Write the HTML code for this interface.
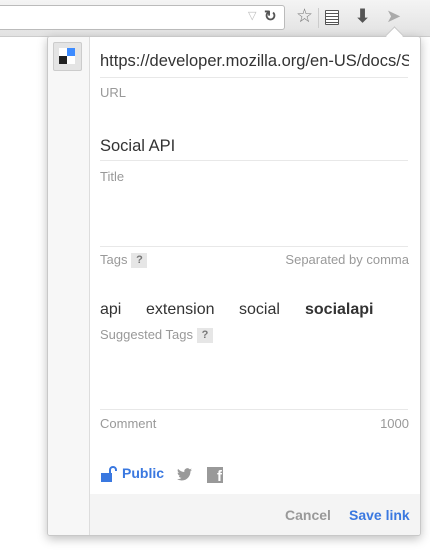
<!DOCTYPE html>
<html><head><style>
body{margin:0;width:430px;height:555px;background:#fff;position:relative;overflow:hidden;font-family:"Liberation Sans",Arial,sans-serif}
.a{position:absolute;white-space:nowrap}
.lbl{font-size:13px;color:#999}
.hr{position:absolute;left:100px;width:308px;height:1px;background:#e8e8e8}
.q{display:inline-block;background:#e6e6e6;color:#777;font-weight:bold;font-size:11px;width:16px;height:15px;line-height:15px;text-align:center;margin-left:4px;vertical-align:1px}
.t{position:absolute;top:301px;font-size:16px;color:#333}
</style></head><body>
<div class="a" style="left:0;top:0;width:430px;height:36px;background:linear-gradient(#f4f4f4,#e2e2e2);border-bottom:1px solid #ccc"></div>
<div class="a" style="left:-5px;top:5px;width:288px;height:23px;background:#fff;border:1px solid #bbb;border-radius:3px"></div>
<div class="a" style="left:248px;top:9px;color:#bbb;font-size:11px">▽</div>
<div class="a" style="left:264px;top:7px;color:#555;font-size:15px;font-weight:bold">↻</div>
<div class="a" style="left:296px;top:5px;color:#777;font-size:19px">☆</div>
<div class="a" style="left:318px;top:8px;width:1px;height:20px;background:#ccc"></div>
<div class="a" style="left:325px;top:10px;width:12px;height:13px;border:1.5px solid #555;border-radius:1px;background:repeating-linear-gradient(#fff 0 2px,#555 2px 3px)"></div>
<div class="a" style="left:355px;top:6px;color:#555;font-size:18px;font-weight:bold">⬇</div>
<div class="a" style="left:386px;top:6px;color:#aaa;font-size:18px">➤</div>
<div class="a" style="left:47px;top:36px;width:372px;height:498px;background:#fff;border:1px solid #c8c8c8;border-radius:3px;box-shadow:0 3px 10px rgba(0,0,0,.25);overflow:hidden">
 <div class="a" style="left:0;top:0;width:41px;height:498px;background:#f7f7f7;border-right:1px solid #ddd"></div>
 <div class="a" style="left:42px;top:457px;width:330px;height:41px;background:#f4f4f4"></div>
</div>
<div class="a" style="left:388px;top:29px;width:12px;height:12px;background:#fff;border-left:1px solid #c8c8c8;border-top:1px solid #c8c8c8;transform:rotate(45deg)"></div>
<div class="a" style="left:53px;top:42px;width:27px;height:27px;background:#e4e4e4;border:1px solid #ccc;border-radius:2px"></div>
<div class="a" style="left:59px;top:48px;width:8px;height:8px;background:#fff"></div>
<div class="a" style="left:67px;top:48px;width:8px;height:8px;background:#3d8bff"></div>
<div class="a" style="left:59px;top:56px;width:8px;height:8px;background:#222"></div>
<div class="a" style="left:67px;top:56px;width:8px;height:8px;background:#fff"></div>
<div class="a" style="left:100px;top:52px;font-size:16.5px;color:#333;width:309px;overflow:hidden">https://developer.mozilla.org/en-US/docs/S</div>
<div class="hr" style="top:77px"></div>
<div class="a lbl" style="left:100px;top:85px">URL</div>
<div class="a" style="left:100px;top:137px;font-size:16.5px;color:#333">Social API</div>
<div class="hr" style="top:160px"></div>
<div class="a lbl" style="left:100px;top:169px">Title</div>
<div class="hr" style="top:246px"></div>
<div class="a lbl" style="left:100px;top:252px">Tags<span class="q">?</span></div>
<div class="a lbl" style="right:21px;top:252px">Separated by comma</div>
<div class="t" style="left:100px">api</div>
<div class="t" style="left:146px">extension</div>
<div class="t" style="left:239px">social</div>
<div class="t" style="left:305px;font-weight:bold">socialapi</div>
<div class="a lbl" style="left:100px;top:327px">Suggested Tags<span class="q">?</span></div>
<div class="hr" style="top:409px"></div>
<div class="a lbl" style="left:100px;top:416px">Comment</div>
<div class="a lbl" style="right:21px;top:416px">1000</div>
<svg class="a" style="left:100px;top:466px" width="19" height="16" viewBox="0 0 19 16"><rect x="1" y="7" width="11" height="9" fill="#3a78e0"/><path d="M10 7V4a3 3 0 0 1 6 0v1" stroke="#3a78e0" stroke-width="2" fill="none"/></svg>
<div class="a" style="left:122px;top:465px;font-size:14px;font-weight:bold;color:#3a78e0">Public</div>
<svg class="a" style="left:177px;top:468px" width="15" height="13" viewBox="0 0 24 20"><path fill="#999" d="M24 2.4a10 10 0 0 1-2.8.8A5 5 0 0 0 23.3.4a10 10 0 0 1-3.1 1.2A4.9 4.9 0 0 0 11.8 6 14 14 0 0 1 1.7.9a4.9 4.9 0 0 0 1.5 6.6 4.9 4.9 0 0 1-2.2-.6 4.9 4.9 0 0 0 3.9 4.9 5 5 0 0 1-2.2.1 4.9 4.9 0 0 0 4.6 3.4A9.9 9.9 0 0 1 0 17.3 14 14 0 0 0 7.5 19.5c9 0 14-7.5 14-14v-.6A10 10 0 0 0 24 2.4z"/></svg>
<div class="a" style="left:207px;top:467px;width:16px;height:16px;background:#999;color:#fff;font-weight:bold;font-size:15px;text-align:right;line-height:20px;overflow:hidden"><span style="margin-right:1px">f</span></div>
<div class="a" style="left:285px;top:507px;font-size:14px;font-weight:bold;color:#999">Cancel</div>
<div class="a" style="left:349px;top:507px;font-size:14px;font-weight:bold;color:#3a78e0">Save link</div>
</body></html>
